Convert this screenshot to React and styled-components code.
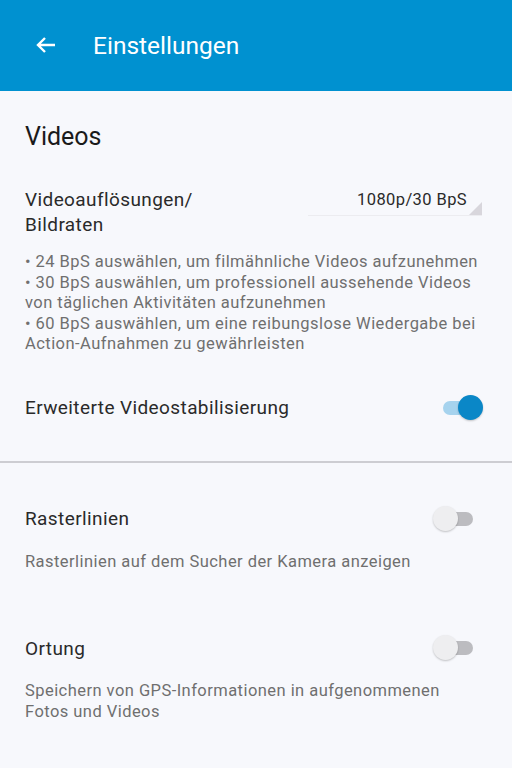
import styled, { createGlobalStyle } from "styled-components";

const Global = createGlobalStyle`
  html, body {
    margin: 0;
    padding: 0;
    background: #f7f8fc;
    font-family: Roboto, "Noto Sans", sans-serif;
  }
`;

const Page = styled.div`
  width: 512px;
  min-height: 768px;
  background: #f7f8fc;
`;

const TopBar = styled.header`
  height: 91px;
  background: #0091d0;
  display: flex;
  align-items: center;
  color: #ffffff;
  padding-left: 33px;
  box-sizing: border-box;
`;

const Back = styled.div`
  width: 26px;
  height: 26px;
  display: flex;
  align-items: center;
  justify-content: center;
  margin-right: 34px;
  margin-top: -2px;
`;

const Title = styled.h1`
  margin: 0;
  font-size: 24.5px;
  font-weight: 400;
`;

const Section = styled.section`
  padding: 0 30px 0 25px;
`;

const SectionTitle = styled.h2`
  margin: 0;
  padding-top: 31px;
  font-size: 25px;
  line-height: 30px;
  font-weight: 400;
  color: #1a1a1a;
`;

const Row = styled.div`
  display: flex;
  align-items: ${(p) => (p.$top ? "flex-start" : "center")};
  justify-content: space-between;
  margin-top: ${(p) => p.$mt}px;
  min-height: ${(p) => p.$h || 0}px;
`;

const Label = styled.div`
  font-size: 19px;
  line-height: 25px;
  letter-spacing: 0.4px;
  color: #2a2a2a;
`;

const Desc = styled.div`
  font-size: 16.5px;
  line-height: 20.5px;
  letter-spacing: 0.45px;
  color: #6f6f6f;
  margin-top: ${(p) => p.$mt}px;
  white-space: pre-line;
`;

const Select = styled.div`
  position: relative;
  width: 174px;
  height: 29px;
  border-bottom: 1px solid #ececf0;
  font-size: 16.5px;
  letter-spacing: 0.4px;
  color: #2a2a2a;
  text-align: right;
  padding-right: 15px;
  box-sizing: border-box;
  line-height: 26px;
  &::after {
    content: "";
    position: absolute;
    right: 0;
    bottom: 0;
    width: 0;
    height: 0;
    border-left: 13px solid transparent;
    border-bottom: 13px solid #d8d6dc;
  }
`;

const Toggle = styled.div`
  position: relative;
  width: 40px;
  height: 26px;
  margin-right: ${(p) => (p.$on ? -1 : 9)}px;
  &::before {
    content: "";
    position: absolute;
    left: ${(p) => (p.$on ? 0 : 6)}px;
    right: ${(p) => (p.$on ? 4 : 0)}px;
    top: 6px;
    height: 14px;
    border-radius: 7px;
    background: ${(p) => (p.$on ? "#a6d3ee" : "#bcbcc0")};
  }
  &::after {
    content: "";
    position: absolute;
    top: 0;
    ${(p) => (p.$on ? "right: 0;" : "left: 0;")}
    width: 25px;
    height: 25px;
    border-radius: 50%;
    background: ${(p) => (p.$on ? "#0a87c7" : "#eeeef0")};
    box-shadow: 0 1px 2px rgba(0, 0, 0, 0.22);
  }
`;

const Divider = styled.hr`
  margin: 29px 0 0;
  border: none;
  height: 2px;
  background: #cdcdd2;
`;

export default function App() {
  return (
    <Page>
      <Global />
      <TopBar>
        <Back>
          <svg width="24" height="24" viewBox="0 0 24 24">
            <path
              d="M21 12H4M11 5l-7 7 7 7"
              fill="none"
              stroke="#fff"
              strokeWidth="2.4"
              strokeLinecap="butt"
            />
          </svg>
        </Back>
        <Title>Einstellungen</Title>
      </TopBar>
      <Section>
        <SectionTitle>Videos</SectionTitle>
        <Row $top $mt={35}>
          <Label>
            Videoauflösungen/
            <br />
            Bildraten
          </Label>
          <Select>1080p/30 BpS</Select>
        </Row>
        <Desc $mt={15}>
          {" • 24 BpS auswählen, um filmähnliche Videos aufzunehmen\n • 30 BpS auswählen, um professionell aussehende Videos\nvon täglichen Aktivitäten aufzunehmen\n • 60 BpS auswählen, um eine reibungslose Wiedergabe bei\nAction-Aufnahmen zu gewährleisten"}
        </Desc>
        <Row $mt={29} $h={48}>
          <Label>Erweiterte Videostabilisierung</Label>
          <Toggle $on />
        </Row>
      </Section>
      <Divider />
      <Section>
        <Row $mt={32} $h={48}>
          <Label>Rasterlinien</Label>
          <Toggle />
        </Row>
        <Desc $mt={9}>Rasterlinien auf dem Sucher der Kamera anzeigen</Desc>
        <Row $mt={52} $h={48}>
          <Label>Ortung</Label>
          <Toggle />
        </Row>
        <Desc $mt={9}>
          {"Speichern von GPS-Informationen in aufgenommenen\nFotos und Videos"}
        </Desc>
      </Section>
    </Page>
  );
}
